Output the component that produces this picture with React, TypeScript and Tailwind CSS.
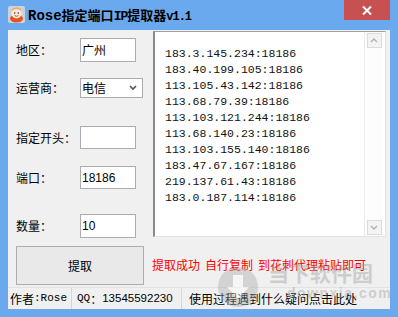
import React from "react";

const cjk = { fontFamily: '"Noto Sans CJK SC", "Liberation Sans", sans-serif' };
const mono = { fontFamily: '"Liberation Mono", "Noto Sans CJK SC", monospace' };
const sans = { fontFamily: '"Liberation Sans", "Noto Sans CJK SC", sans-serif' };

const ips = [
  "183.3.145.234:18186",
  "183.40.199.105:18186",
  "113.105.43.142:18186",
  "113.68.79.39:18186",
  "113.103.121.244:18186",
  "113.68.140.23:18186",
  "113.103.155.140:18186",
  "183.47.67.167:18186",
  "219.137.61.43:18186",
  "183.0.187.114:18186",
];

function Field({ value, w = "w-[56px]", h = "h-[24px]" }: { value: string; w?: string; h?: string }) {
  return (
    <div
      className={`${w} ${h} bg-white border border-[#abadb3] flex items-center pl-[1px] text-[11.5px] text-black leading-none`}
      style={sans}
    >
      <span style={/[0-9]/.test(value) ? sans : cjk} className="text-[12px]">{value}</span>
    </div>
  );
}

function Label({ text }: { text: string }) {
  return (
    <div className="w-[64px] text-[12px] leading-none text-black" style={cjk}>
      {text}
    </div>
  );
}

export default function App() {
  return (
    <div className="relative w-[398px] h-[317px] bg-[#6ba9ee] flex flex-col overflow-hidden">
      {/* title bar */}
      <div className="h-[30px] flex items-start relative">
        <div className="ml-[8px] mt-[6px] w-[17px] h-[17px]">
          <svg width="17" height="17" viewBox="0 0 17 17">
            <rect x="0" y="0" width="17" height="17" rx="2" fill="#c9d3dc" />
            <ellipse cx="8.5" cy="12.5" rx="6.5" ry="4" fill="#e8501e" />
            <circle cx="8.5" cy="7.5" r="5" fill="#fbe8d8" />
            <circle cx="6.7" cy="7" r="0.8" fill="#333" />
            <circle cx="10.3" cy="7" r="0.8" fill="#333" />
            <path d="M6.5 9.5 Q8.5 11 10.5 9.5" stroke="#c0392b" strokeWidth="0.8" fill="none" />
            <path d="M4 4 Q8.5 0.5 13 4" stroke="#f4a460" strokeWidth="1.4" fill="none" />
          </svg>
        </div>
        <div className="ml-[3px] mt-[6px] flex items-baseline h-[18px] font-bold text-black whitespace-nowrap leading-[18px]">
          <span style={mono} className="text-[14px]">Rose</span>
          <span style={cjk} className="text-[13px]">指定端口</span>
          <span style={mono} className="text-[13px] tracking-[-1px]">IP</span>
          <span style={cjk} className="text-[13px]">提取器</span>
          <span style={mono} className="text-[12px] tracking-[-1px]">v1.1</span>
        </div>
        <div className="absolute left-[344px] top-0 w-[46px] h-[20px] bg-[#c75050] flex items-center justify-center">
          <svg width="10" height="9" viewBox="0 0 10 9">
            <path d="M1 0.5 L9 8.5 M9 0.5 L1 8.5" stroke="#ffffff" strokeWidth="2" />
          </svg>
        </div>
      </div>

      {/* client */}
      <div className="mx-[8px] mb-[8px] flex-1 bg-[#f0f0f0] flex flex-col">
        <div className="h-[257px] flex">
          {/* left column */}
          <div className="w-[145px] pl-[8px] flex flex-col">
            <div className="mt-[8px] h-[24px] flex items-center">
              <Label text="地区：" />
              <Field value="广州" />
            </div>
            <div className="mt-[16px] h-[20px] flex items-center">
              <Label text="运营商：" />
              <div className="w-[63px] h-[20px] bg-white border border-[#acacac] flex items-center justify-between pl-[1px] pr-[5px]">
                <span className="text-[12px] leading-none text-black" style={cjk}>电信</span>
                <svg width="8" height="6" viewBox="0 0 8 6">
                  <path d="M1 1 L4 4 L7 1" stroke="#555" strokeWidth="1.6" fill="none" />
                </svg>
              </div>
            </div>
            <div className="mt-[28px] h-[23px] flex items-center">
              <Label text="指定开头：" />
              <Field value="" h="h-[23px]" />
            </div>
            <div className="mt-[17px] h-[23px] flex items-center">
              <Label text="端口：" />
              <Field value="18186" h="h-[23px]" />
            </div>
            <div className="mt-[25px] h-[24px] flex items-center">
              <Label text="数量：" />
              <Field value="10" />
            </div>
            <button className="mt-[8px] w-[128px] h-[39px] bg-[#e9e9e9] border border-[#adadad] flex items-center justify-center text-[12px] text-black leading-none" style={cjk}>
              提取
            </button>
          </div>

          {/* right column */}
          <div className="flex flex-col pt-[1px]">
            <div className="w-[233px] h-[206px] bg-white border-l-2 border-t border-l-[#8a8a8a] border-t-[#a0a0a0] border-r border-b border-r-[#e3e3e3] border-b-[#e3e3e3] flex">
              <div className="flex-1 pl-[10px] pt-[14px] text-[11.5px] leading-[16px] text-[#111]" style={mono}>
                {ips.map((ip) => (
                  <div key={ip} className="whitespace-nowrap">{ip}</div>
                ))}
              </div>
              <div className="w-[19px] border-l border-[#ececec] bg-[#fdfdfd] flex flex-col justify-between items-center pt-[1px] pb-[1px] mr-[2px]">
                <div className="w-[15px] h-[15px] bg-[#f3f3f3] border border-[#dcdcdc] flex items-center justify-center">
                  <svg width="8" height="5" viewBox="0 0 8 5">
                    <path d="M1 4 L4 1 L7 4" stroke="#b0b0b0" strokeWidth="1.4" fill="none" />
                  </svg>
                </div>
                <div className="w-[15px] h-[15px] bg-[#f3f3f3] border border-[#dcdcdc] flex items-center justify-center">
                  <svg width="8" height="5" viewBox="0 0 8 5">
                    <path d="M1 1 L4 4 L7 1" stroke="#b0b0b0" strokeWidth="1.4" fill="none" />
                  </svg>
                </div>
              </div>
            </div>
            <div className="mt-[20px] -ml-[1px] h-[16px] leading-[16px] text-[12px] text-[#ff0000] whitespace-nowrap flex" style={cjk}>
              <span>提取成功</span>
              <span className="ml-[5px]">自行复制</span>
              <span className="ml-[5px]">到花刺代理粘贴即可</span>
            </div>
          </div>
        </div>

        {/* status bar */}
        <div className="h-[22px] flex items-center border-t border-[#e2e2e2] text-[12px] text-black leading-none">
          <div className="w-[64px] h-full flex items-center pl-[2px] border-r border-[#d5d5d5]">
            <span style={cjk}>作者</span>
            <span style={mono} className="text-[11px]">:Rose</span>
          </div>
          <div className="w-[110px] h-full flex items-center pl-[5px] border-r border-[#d5d5d5]">
            <span style={mono} className="text-[11px]">QQ</span>
            <span style={cjk}>：</span>
            <span style={sans} className="text-[11.5px]">13545592230</span>
          </div>
          <div className="flex-1 h-full flex items-center pl-[7px]">
            <span style={cjk}>使用过程遇到什么疑问点击此处</span>
          </div>
        </div>
      </div>

      {/* watermark overlay */}
      <div className="absolute left-[217px] top-[266px] pointer-events-none opacity-40">
        <svg width="42" height="42" viewBox="0 0 42 42">
          <circle cx="21" cy="21" r="20" fill="#a8a8a8" />
          <path d="M16 9 H26 V21 H32 L21 33 L10 21 H16 Z" fill="#ffffff" />
        </svg>
      </div>
      <div
        className="absolute left-[268px] top-[259px] text-[21px] font-bold leading-[26px] text-[#9a9a9a] opacity-40 pointer-events-none whitespace-nowrap"
        style={cjk}
      >
        当下软件园
      </div>
      <div
        className="absolute left-[287px] top-[285px] text-[14px] font-bold leading-[16px] tracking-[1.5px] text-[#9a9a9a] opacity-40 pointer-events-none"
        style={sans}
      >
        downxia.com
      </div>
    </div>
  );
}
